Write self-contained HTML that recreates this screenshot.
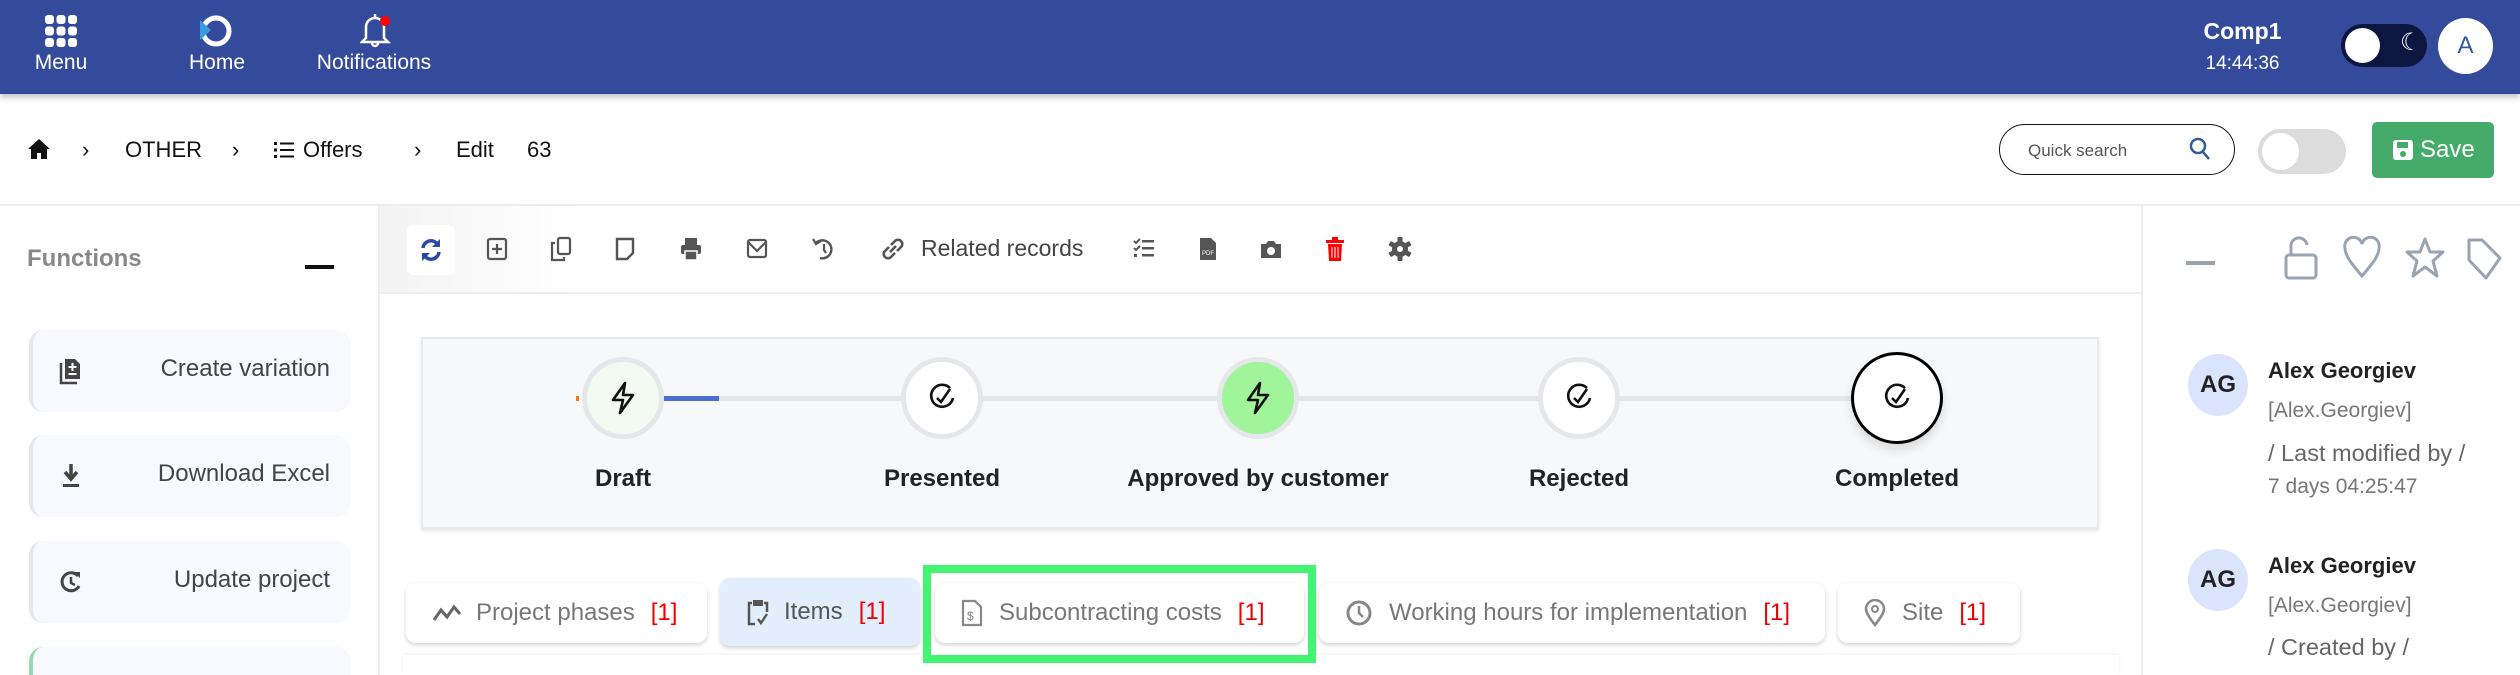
<!DOCTYPE html>
<html style="width:2520px;height:675px;overflow:hidden"><head><meta charset="utf-8"><style>
*{margin:0;padding:0;box-sizing:border-box}
body{width:2520px;height:675px;overflow:hidden;background:#fff;font-family:"Liberation Sans",Arial,sans-serif;position:relative;color:#222}
.a{position:absolute}
.hdr{left:0;top:0;width:2520px;height:94px;background:#344b9b;box-shadow:0 3px 6px rgba(0,0,0,.25)}
.nl{color:#fff;font-size:21px;text-align:center}
.bc{font-size:22px;color:#111;top:137px}
.fn{left:29px;width:321px;height:82px;background:#f8f9fe;border-radius:14px;border-left:4px solid #e6e6ee}
.fn span{position:absolute;right:20px;top:25px;font-size:24px;color:#444}
.fn svg{position:absolute;left:26px;top:27px}
.ti{top:236px}
.circ{border-radius:50%;border:5px solid #e6e7ea;background:#fff;width:82px;height:82px;display:flex;align-items:center;justify-content:center}
.lbl{font-size:24px;font-weight:bold;color:#222;top:465px;text-align:center;width:340px}
.tab{top:583px;height:60px;background:#fff;border-radius:10px;box-shadow:0 2px 4px rgba(0,0,0,.18);font-size:24px;color:#777;display:flex;align-items:center;padding-left:26px}
.tab b{color:#e00;font-weight:normal;margin-left:16px}
.ag{width:60px;height:62px;border-radius:50%;background:#dbe4fd;font-weight:bold;font-size:24px;display:flex;align-items:center;justify-content:center;left:2188px}
.nm{left:2268px;font-weight:bold;font-size:22px;color:#222}
.us{left:2268px;font-size:21px;color:#777}
.md{left:2268px;font-size:23.5px;color:#666}
</style></head><body>
<div class="a hdr"></div>
<svg class="a" style="left:45px;top:15px" width="32" height="32" viewBox="0 0 32 32" fill="#fff">
<rect x="0" y="0" width="9" height="9" rx="3"/><rect x="11.5" y="0" width="9" height="9" rx="3"/><rect x="23" y="0" width="9" height="9" rx="3"/>
<rect x="0" y="11.5" width="9" height="9" rx="3"/><rect x="11.5" y="11.5" width="9" height="9" rx="3"/><rect x="23" y="11.5" width="9" height="9" rx="3"/>
<rect x="0" y="23" width="9" height="9" rx="3"/><rect x="11.5" y="23" width="9" height="9" rx="3"/><rect x="23" y="23" width="9" height="9" rx="3"/></svg>
<div class="a nl" style="left:21px;top:51px;width:80px">Menu</div>
<svg class="a" style="left:197px;top:13px" width="36" height="36" viewBox="0 0 36 36"><circle cx="19" cy="18" r="13" fill="none" stroke="#fff" stroke-width="5"/><path d="M3 7 L14 17 L3 27Z" fill="#3a9be0"/></svg>
<div class="a nl" style="left:177px;top:51px;width:80px">Home</div>
<svg class="a" style="left:360px;top:12px" width="32" height="36" viewBox="0 0 32 36"><path d="M6 26 V15 a9 9 0 0 1 18 0 V26 L28 30 H2Z M12 31 a3 3 0 0 0 6 0" fill="none" stroke="#fff" stroke-width="2.5"/><path d="M15 2 v4" stroke="#fff" stroke-width="2.5"/><circle cx="25" cy="9" r="5" fill="#f00"/></svg>
<div class="a nl" style="left:304px;top:51px;width:140px">Notifications</div>
<div class="a" style="left:2195px;top:18px;width:95px;text-align:center;color:#fff;font-weight:bold;font-size:23px">Comp1</div>
<div class="a" style="left:2190px;top:53px;width:105px;text-align:center;color:#fff;font-size:19px">14:44:36</div>
<div class="a" style="left:2341px;top:24px;width:86px;height:43px;border-radius:22px;background:#0d1640"></div>
<div class="a" style="left:2345px;top:28px;width:35px;height:35px;border-radius:50%;background:#fff"></div>
<div class="a" style="left:2400px;top:28px;color:#fff;font-size:24px">&#9790;</div>
<div class="a" style="left:2438px;top:18px;width:55px;height:56px;border-radius:50%;background:#fff;color:#2f5d9a;font-size:24px;display:flex;align-items:center;justify-content:center">A</div>

<svg class="a" style="left:27px;top:137px" width="24" height="24" viewBox="0 0 24 24"><path d="M12 2 L1 12 H4 V22 H10 V16 H14 V22 H20 V12 H23Z" fill="#111"/></svg>
<div class="a bc" style="left:82px">&#x203A;</div>
<div class="a bc" style="left:125px">OTHER</div>
<div class="a bc" style="left:232px">&#x203A;</div>
<svg class="a" style="left:274px;top:141px" width="20" height="18" viewBox="0 0 20 18" fill="#111"><rect x="0" y="1" width="3" height="3"/><rect x="6" y="1.5" width="14" height="2"/><rect x="0" y="7.5" width="3" height="3"/><rect x="6" y="8" width="14" height="2"/><rect x="0" y="14" width="3" height="3"/><rect x="6" y="14.5" width="14" height="2"/></svg>
<div class="a bc" style="left:303px">Offers</div>
<div class="a bc" style="left:414px">&#x203A;</div>
<div class="a bc" style="left:456px">Edit</div>
<div class="a bc" style="left:527px">63</div>

<div class="a" style="left:1999px;top:124px;width:236px;height:51px;border:1.5px solid #111;border-radius:26px"></div>
<div class="a" style="left:2028px;top:141px;font-size:17px;color:#555">Quick search</div>
<svg class="a" style="left:2188px;top:136px" width="24" height="26" viewBox="0 0 24 26"><circle cx="10" cy="10" r="7" fill="none" stroke="#2f5d9a" stroke-width="2.5"/><path d="M15 16 L21 23" stroke="#2f5d9a" stroke-width="2.5"/></svg>
<div class="a" style="left:2258px;top:129px;width:88px;height:45px;border-radius:23px;background:#dcdcdc"></div>
<div class="a" style="left:2262px;top:133px;width:37px;height:37px;border-radius:50%;background:#fff"></div>
<div class="a" style="left:2372px;top:122px;width:122px;height:56px;border-radius:5px;background:#45ab6a;color:#fff;font-size:24px;display:flex;align-items:center;padding-left:20px"><svg width="22" height="22" viewBox="0 0 22 22" style="margin-right:6px"><rect x="1" y="1" width="20" height="20" rx="3" fill="#fff"/><rect x="5" y="3" width="11" height="6" fill="#45ab6a"/><circle cx="11" cy="15" r="3" fill="#45ab6a"/></svg>Save</div>

<div class="a" style="left:0;top:204px;width:2520px;height:2px;background:#ececec"></div>
<div class="a" style="left:378px;top:205px;width:2px;height:470px;background:#eee"></div>
<div class="a" style="left:2141px;top:205px;width:2px;height:470px;background:#eee"></div>

<div class="a" style="left:27px;top:245px;font-size:24px;font-weight:bold;color:#888">Functions</div>
<div class="a" style="left:305px;top:265px;width:29px;height:4px;background:#111"></div>
<div class="a fn" style="top:330px"><svg width="24" height="28" viewBox="0 0 24 28"><path d="M2 6 V26 H18" fill="none" stroke="#444" stroke-width="2.5"/><path d="M6 2 H16 L21 7 V22 H6Z" fill="#444"/><path d="M13.5 6 V14 M9.5 10 H17.5 M9.5 17 H17.5" stroke="#fff" stroke-width="2"/></svg><span>Create variation</span></div>
<div class="a fn" style="top:435px"><svg width="24" height="28" viewBox="0 0 24 28"><path d="M12 2 V16 M6 10 L12 17 L18 10" fill="none" stroke="#444" stroke-width="3.5"/><rect x="4" y="22" width="16" height="3" fill="#444"/></svg><span>Download Excel</span></div>
<div class="a fn" style="top:541px"><svg width="24" height="28" viewBox="0 0 24 28"><path d="M19 8 A9 9 0 1 0 20 18" fill="none" stroke="#444" stroke-width="3"/><path d="M12 9 V15 L16 17" fill="none" stroke="#444" stroke-width="2.5"/><path d="M15 4 L21 4 L21 10Z" fill="#444"/></svg><span>Update project</span></div>
<div class="a fn" style="top:647px;height:28px;border-bottom-left-radius:0;border-bottom-right-radius:0;border-left-color:#9ad9b0"></div>

<div class="a" style="left:380px;top:206px;width:1761px;height:88px;border-bottom:2px solid #eee;background:linear-gradient(90deg,#f3f3f3 0,#fff 200px)"></div>
<div class="a" style="left:407px;top:225px;width:48px;height:50px;background:#fff;border-radius:6px"></div>
<svg class="a" style="left:419px;top:237px" width="24" height="26" viewBox="0 0 24 26"><path d="M4 11 A8 8 0 0 1 19 8 M20 15 A8 8 0 0 1 5 18" fill="none" stroke="#2a48a8" stroke-width="3.5"/><path d="M21 2 V10 H13Z M3 24 V16 H11Z" fill="#2a48a8"/></svg>
<svg class="a ti" style="left:485px" width="24" height="26" viewBox="0 0 24 26"><rect x="3" y="3" width="18" height="20" rx="2" fill="none" stroke="#555" stroke-width="2.2"/><path d="M12 8 V18 M7 13 H17" stroke="#555" stroke-width="2.2"/></svg>
<svg class="a ti" style="left:549px" width="24" height="26" viewBox="0 0 24 26"><rect x="9" y="2" width="12" height="16" rx="2" fill="none" stroke="#555" stroke-width="2.2"/><path d="M6 7 H3 V24 H15 V21" fill="none" stroke="#555" stroke-width="2.2"/></svg>
<svg class="a ti" style="left:613px" width="24" height="26" viewBox="0 0 24 26"><path d="M4 3 H20 V17 L14 23 H4Z" fill="none" stroke="#555" stroke-width="2.4"/></svg>
<svg class="a ti" style="left:679px" width="24" height="26" viewBox="0 0 24 26"><rect x="6" y="2" width="12" height="7" fill="#555"/><rect x="2" y="9" width="20" height="9" rx="2" fill="#555"/><rect x="6" y="15" width="12" height="9" fill="#555" stroke="#fff" stroke-width="1.5"/></svg>
<svg class="a ti" style="left:745px" width="24" height="26" viewBox="0 0 24 26"><rect x="3" y="4" width="18" height="17" rx="2" fill="none" stroke="#555" stroke-width="2.2"/><path d="M3 6 L12 15 L21 6" fill="none" stroke="#555" stroke-width="2.2"/></svg>
<svg class="a ti" style="left:811px" width="24" height="26" viewBox="0 0 24 26"><path d="M5 7 A9 9 0 1 1 9 22" fill="none" stroke="#555" stroke-width="2.4"/><path d="M2 3 L5 8 L10 5" fill="none" stroke="#555" stroke-width="2.2"/><path d="M13 8 V14 L15 17" fill="none" stroke="#555" stroke-width="2.2"/></svg>
<svg class="a ti" style="left:880px" width="26" height="26" viewBox="0 0 26 26"><path d="M11 9 L15 5 A4 4 0 0 1 21 11 L17 15 M15 17 L11 21 A4 4 0 0 1 5 15 L9 11 M10 16 L16 10" fill="none" stroke="#555" stroke-width="2.6"/></svg>
<div class="a" style="left:921px;top:235px;font-size:23px;color:#444">Related records</div>
<svg class="a ti" style="left:1132px" width="24" height="26" viewBox="0 0 24 26" fill="#555"><path d="M2 5 L4 7 L8 3" fill="none" stroke="#555" stroke-width="2"/><rect x="10" y="4" width="12" height="2.5"/><path d="M2 12 L4 14 L8 10" fill="none" stroke="#555" stroke-width="2"/><rect x="10" y="11" width="12" height="2.5"/><rect x="2" y="18" width="3" height="3"/><rect x="10" y="18" width="12" height="2.5"/></svg>
<svg class="a ti" style="left:1198px" width="20" height="26" viewBox="0 0 20 26"><path d="M2 2 H13 L18 7 V24 H2Z" fill="#555"/><text x="4" y="19" font-size="6" fill="#fff" font-family="Liberation Sans">PDF</text></svg>
<svg class="a ti" style="left:1259px" width="24" height="26" viewBox="0 0 24 26"><path d="M2 8 H7 L9 5 H15 L17 8 H22 V22 H2Z" fill="#555"/><circle cx="12" cy="15" r="4" fill="#fff"/></svg>
<svg class="a ti" style="left:1324px" width="22" height="26" viewBox="0 0 22 26"><rect x="2" y="4" width="18" height="3" fill="#f00"/><rect x="8" y="1" width="6" height="3" fill="#f00"/><path d="M4 8 H18 L17 25 H5Z" fill="#f00"/><path d="M8 11 V22 M11 11 V22 M14 11 V22" stroke="#fff" stroke-width="1"/></svg>
<svg class="a ti" style="left:1388px" width="24" height="26" viewBox="0 0 24 26"><g fill="#555"><rect x="9.5" y="1" width="5" height="24" rx="1"/><rect x="9.5" y="1" width="5" height="24" rx="1" transform="rotate(60 12 13)"/><rect x="9.5" y="1" width="5" height="24" rx="1" transform="rotate(120 12 13)"/><circle cx="12" cy="13" r="8"/></g><circle cx="12" cy="13" r="3" fill="#fff"/></svg>

<div class="a" style="left:421px;top:337px;width:1678px;height:192px;background:#f7f8fa;border:2px solid #e8e9ec;box-shadow:0 2px 4px rgba(0,0,0,.1)"></div>
<div class="a" style="left:620px;top:396px;width:1280px;height:5px;background:#e5e6ea"></div>
<div class="a" style="left:664px;top:396px;width:55px;height:5px;background:#4a6fd0"></div>
<div class="a" style="left:576px;top:396px;width:3px;height:5px;background:#f47a20"></div>
<div class="a circ" style="left:582px;top:357px;background:#f2fbf2"><svg width="30" height="34" viewBox="0 0 30 34"><path d="M17 2 L5 19 H15 L12 32 L25 14 H15Z" fill="none" stroke="#111" stroke-width="2.6" stroke-linejoin="round"/></svg></div>
<div class="a circ" style="left:901px;top:357px"><svg width="30" height="34" viewBox="0 0 30 34"><path d="M23 7 A11 11 0 1 0 26 17" fill="none" stroke="#111" stroke-width="2.6"/><path d="M10 17 L14 21 L23 8" fill="none" stroke="#111" stroke-width="2.6"/></svg></div>
<div class="a circ" style="left:1217px;top:357px;background:#a0f49a"><svg width="30" height="34" viewBox="0 0 30 34"><path d="M17 2 L5 19 H15 L12 32 L25 14 H15Z" fill="none" stroke="#111" stroke-width="2.6" stroke-linejoin="round"/></svg></div>
<div class="a circ" style="left:1538px;top:357px"><svg width="30" height="34" viewBox="0 0 30 34"><path d="M23 7 A11 11 0 1 0 26 17" fill="none" stroke="#111" stroke-width="2.6"/><path d="M10 17 L14 21 L23 8" fill="none" stroke="#111" stroke-width="2.6"/></svg></div>
<div class="a circ" style="left:1851px;top:352px;width:92px;height:92px;border:3.5px solid #000;box-shadow:0 6px 10px rgba(0,0,0,.12)"><svg width="30" height="34" viewBox="0 0 30 34"><path d="M23 7 A11 11 0 1 0 26 17" fill="none" stroke="#111" stroke-width="2.6"/><path d="M10 17 L14 21 L23 8" fill="none" stroke="#111" stroke-width="2.6"/></svg></div>
<div class="a lbl" style="left:453px">Draft</div>
<div class="a lbl" style="left:772px">Presented</div>
<div class="a lbl" style="left:1088px">Approved by customer</div>
<div class="a lbl" style="left:1409px">Rejected</div>
<div class="a lbl" style="left:1727px">Completed</div>

<div class="a" style="left:403px;top:655px;width:1716px;height:20px;background:#fff;box-shadow:0 -1px 4px rgba(0,0,0,.06)"></div>
<div class="a tab" style="left:406px;width:301px"><svg width="30" height="22" viewBox="0 0 30 22" style="margin-right:14px"><path d="M2 18 L9 8 L15 15 L22 5 L28 12" fill="none" stroke="#666" stroke-width="3"/></svg>Project phases<b>[1]</b></div>
<div class="a tab" style="left:720px;width:200px;top:578px;height:68px;background:#e3eefc;color:#555"><svg width="24" height="28" viewBox="0 0 24 28" style="margin-right:14px"><path d="M6 5 H3 V26 H9 M18 5 H21 V14" fill="none" stroke="#555" stroke-width="2.5"/><rect x="7" y="2" width="10" height="6" fill="#555"/><path d="M12 21 L15 25 L21 16" fill="none" stroke="#555" stroke-width="2.4"/></svg>Items<b>[1]</b></div>
<div class="a" style="left:923px;top:565px;width:393px;height:98px;border:8px solid #42f472"></div>
<div class="a tab" style="left:935px;width:369px"><svg width="22" height="28" viewBox="0 0 22 28" style="margin-right:16px"><path d="M2 2 H14 L20 8 V26 H2Z" fill="none" stroke="#888" stroke-width="2.2"/><text x="6" y="21" font-size="12" fill="#888" font-family="Liberation Sans">$</text></svg>Subcontracting costs<b>[1]</b></div>
<div class="a tab" style="left:1319px;width:506px"><svg width="28" height="28" viewBox="0 0 28 28" style="margin-right:16px"><circle cx="14" cy="14" r="11" fill="none" stroke="#888" stroke-width="3"/><path d="M14 7 V14 L18 18" fill="none" stroke="#888" stroke-width="2.5"/></svg>Working hours for implementation<b>[1]</b></div>
<div class="a tab" style="left:1838px;width:182px"><svg width="22" height="28" viewBox="0 0 22 28" style="margin-right:16px"><path d="M11 26 C4 17 2 13 2 10 A9 9 0 0 1 20 10 C20 13 18 17 11 26Z" fill="none" stroke="#888" stroke-width="2.5"/><circle cx="11" cy="10" r="3" fill="none" stroke="#888" stroke-width="2"/></svg>Site<b>[1]</b></div>

<div class="a" style="left:2186px;top:261px;width:29px;height:4px;background:#9aa3b2"></div>
<svg class="a" style="left:2283px;top:235px" width="36" height="46" viewBox="0 0 36 46"><rect x="3" y="20" width="30" height="23" rx="3" fill="none" stroke="#9aa3b2" stroke-width="3"/><path d="M8 20 V12 A8 8 0 0 1 24 10" fill="none" stroke="#9aa3b2" stroke-width="3"/></svg>
<svg class="a" style="left:2342px;top:236px" width="40" height="44" viewBox="0 0 40 44"><path d="M20 40 C10 28 3 20 3 12 A8.5 8.5 0 0 1 20 8 A8.5 8.5 0 0 1 37 12 C37 20 30 28 20 40Z" fill="none" stroke="#9aa3b2" stroke-width="3"/></svg>
<svg class="a" style="left:2405px;top:236px" width="40" height="44" viewBox="0 0 40 44"><path d="M20 3 L25 16 L38 16 L28 25 L32 40 L20 31 L8 40 L12 25 L2 16 L15 16Z" fill="none" stroke="#9aa3b2" stroke-width="3" stroke-linejoin="round"/></svg>
<svg class="a" style="left:2466px;top:236px" width="40" height="46" viewBox="0 0 40 46"><path d="M3 4 H16 L34 22 L20 42 L3 24Z" fill="none" stroke="#9aa3b2" stroke-width="3" stroke-linejoin="round"/></svg>

<div class="a ag" style="top:354px">AG</div>
<div class="a nm" style="top:358px">Alex Georgiev</div>
<div class="a us" style="top:399px">[Alex.Georgiev]</div>
<div class="a md" style="top:440px">/ Last modified by /</div>
<div class="a us" style="top:475px">7 days 04:25:47</div>
<div class="a ag" style="top:549px">AG</div>
<div class="a nm" style="top:553px">Alex Georgiev</div>
<div class="a us" style="top:594px">[Alex.Georgiev]</div>
<div class="a md" style="top:634px">/ Created by /</div>
</body></html>
